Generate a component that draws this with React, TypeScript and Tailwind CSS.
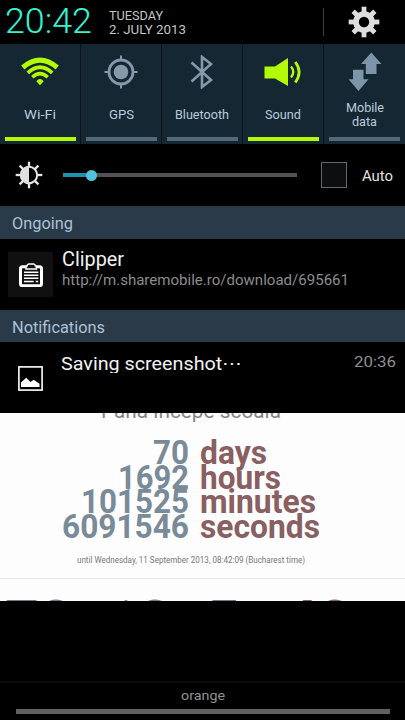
import { useLayoutEffect, useRef, useState } from "react";
import type { ReactNode } from "react";

// Single-line text stretched horizontally to a given width.
function Fit({ w, className = "", children }: { w: number; className?: string; children: ReactNode }) {
  const ref = useRef<HTMLSpanElement>(null);
  const [scale, setScale] = useState(1);
  useLayoutEffect(() => {
    if (ref.current) setScale(w / parseFloat(getComputedStyle(ref.current).width));
  }, [w]);
  return (
    <span className={`block shrink-0 ${className}`} style={{ width: w }}>
      <span ref={ref} className="inline-block origin-left whitespace-nowrap align-top" style={{ transform: `scaleX(${scale})` }}>
        {children}
      </span>
    </span>
  );
}

function Wifi() {
  return (
    <svg width="38" height="30" viewBox="0 0 38 30" fill="none" stroke="#b2fb05">
      <path d="M1.8 10.5Q19-4.3 36.2 10.5" strokeWidth="5" />
      <path d="M6.8 15.8Q19 4.6 31.2 15.8" strokeWidth="3.8" />
      <path d="M11.3 20.3Q19 13 26.7 20.3" strokeWidth="3.4" />
      <path d="M15.3 24.2Q19 19.8 22.7 24.2L19 28.3z" fill="#b2fb05" stroke="none" />
    </svg>
  );
}

function Gps() {
  return (
    <svg width="34" height="34" viewBox="0 0 34 34" fill="none" stroke="#8499a9">
      <circle cx="17" cy="17" r="12" strokeWidth="2.8" />
      <circle cx="17" cy="17" r="7.3" fill="#8499a9" stroke="none" />
      <path d="M17 .5v5M17 28.5v5M.5 17h5M28.5 17h5" strokeWidth="2" />
    </svg>
  );
}

function Bluetooth() {
  return (
    <svg width="24" height="34" viewBox="0 0 24 34" fill="none" stroke="#8499a9" strokeWidth="2.6">
      <path d="M1.5 7.5 21 25l-9 7V2l9 7L1.5 26.5" />
    </svg>
  );
}

function Sound() {
  return (
    <svg width="38" height="30" viewBox="0 0 38 30" fill="none" stroke="#b2fb05">
      <path d="M.5 9.5H11L24 1v28L11 21.5H.5z" fill="#b2fb05" stroke="none" />
      <path d="M27 9.5q4.5 5.5 0 11" strokeWidth="2.4" />
      <path d="M31.3 5q7.6 10 0 20.5" strokeWidth="2.8" />
    </svg>
  );
}

function MobileData() {
  return (
    <svg width="34" height="40" viewBox="0 0 34 40" fill="#7c95a8">
      <path d="M23.3.5 33.5 12h-5v10H17.8V12H13z" />
      <path d="M5 17.8h10.5v9.5h5L10.5 39 .5 27.3H5z" />
    </svg>
  );
}

function Gear() {
  return (
    <svg width="32" height="32" viewBox="-16 -16 32 32">
      <g fill="#dedede">
        {[0, 45, 90, 135].map((a) => (
          <path key={a} d="M-2.4-15.3h4.8v30.6h-4.8z" transform={`rotate(${a})`} />
        ))}
        <circle r="10.8" />
      </g>
      <circle r="5.2" fill="#000" />
    </svg>
  );
}

function Brightness() {
  return (
    <svg width="28" height="28" viewBox="-14 -14 28 28" stroke="#e6e6e6" fill="none">
      {[0, 45, 90, 135, 180, 225, 270, 315].map((a) => (
        <path key={a} d="M0-13.3v5" strokeWidth="2.3" transform={`rotate(${a})`} />
      ))}
      <circle r="8.2" strokeWidth="2" />
      <path d="M0-8.8a8.8 8.8 0 0 0 0 17.6z" fill="#e0e0e0" stroke="none" />
    </svg>
  );
}

function Clipboard() {
  return (
    <svg width="24" height="24" viewBox="0 0 24 24" fill="none" stroke="#fff">
      <rect x="1.5" y="3.8" width="21" height="19" rx="2" strokeWidth="3" />
      <path d="M7 6V3.8Q7 3 7.8 3H8Q8.2 1 9.8 1h4.8q1.6 0 1.8 2h.2q.8 0 .8.8V6z" fill="#111" strokeWidth="1.5" />
      <path d="M5 9.3h14.4M5 12.3h14.4M5 15.3h14.4M5 18.5h9.6M16.7 18.5h2.5" strokeWidth="1.6" />
    </svg>
  );
}

function Picture() {
  return (
    <svg width="25" height="25" viewBox="0 0 25 25">
      <rect x=".9" y=".9" width="23.2" height="23.2" fill="none" stroke="#fff" strokeWidth="1.6" />
      <path d="M3 21v-4.5l5.2-4.7 4.3 4.2 3.2-2.2 5.8 4V21z" fill="#fff" />
    </svg>
  );
}

const tiles = [
  { icon: <Wifi />, lines: [["Wi-Fi", 32]], on: true },
  { icon: <Gps />, lines: [["GPS", 25]], on: false },
  { icon: <Bluetooth />, lines: [["Bluetooth", 54]], on: false },
  { icon: <Sound />, lines: [["Sound", 36]], on: true },
  { icon: <MobileData />, lines: [["Mobile", 38], ["data", 25]], on: false },
] as { icon: ReactNode; lines: [string, number][]; on: boolean }[];

const countdown: [string, number, string, number][] = [
  ["70", 36, "days", 67],
  ["1692", 71, "hours", 81],
  ["101525", 108, "minutes", 116],
  ["6091546", 127, "seconds", 120],
];

export default function App() {
  return (
    <div className="flex h-[720px] w-[405px] flex-col overflow-hidden bg-black font-['Roboto',sans-serif] text-white">
      <header className="flex h-11 shrink-0 items-start pl-[5px]">
        <Fit w={87} className="pt-[1px] text-[35px] font-light leading-[41px] text-[#2ff5d5]">20:42</Fit>
        <div className="ml-[17px] pt-[9px] text-[13px] leading-[14px] text-[#c4c4c4]">
          <Fit w={54}>TUESDAY</Fit>
          <Fit w={77}>2. JULY 2013</Fit>
        </div>
        <div className="ml-auto mt-2 h-7 w-px bg-[#3d4246]" />
        <div className="ml-[24px] mr-[25px] mt-[6px]"><Gear /></div>
      </header>

      <section className="grid h-[100px] shrink-0 grid-cols-5 bg-[#142733]">
        {tiles.map((t, i) => (
          <div key={i} className={`flex flex-col items-center ${i < 4 ? "border-r border-[#08131b]" : ""}`}>
            <div className="flex h-[56px] items-center justify-center">{t.icon}</div>
            <div className="flex h-[37px] flex-col items-center justify-center pb-2 text-[13px] leading-[14px] text-[#b9cbdb]">
              {t.lines.map(([s, w]) => <Fit key={s} w={w}>{s}</Fit>)}
            </div>
            <div className={`h-1 w-[71px] ${t.on ? "bg-[#b2fb05]" : "bg-[#536878]"}`} />
          </div>
        ))}
      </section>

      <section className="flex h-[62px] shrink-0 items-center pl-[15px]">
        <Brightness />
        <div className="ml-5 flex h-1 w-[234px] items-center bg-[#505256]">
          <div className="h-1 w-[23px] bg-[#1e91ab]" />
          <div className="size-[11px] shrink-0 rounded-full bg-[#53c2dc]" />
        </div>
        <div className="ml-6 size-[26px] border border-[#65686a] bg-[#0d0e11]" />
        <Fit w={31} className="ml-[15px] pt-px text-[14px] leading-4 text-[#e1e1e1]">Auto</Fit>
      </section>

      <div className="h-[33px] shrink-0 bg-[#2a3a48] pl-3 pt-[8px] text-[16px] leading-5 text-[#acc3d8]">
        <Fit w={61}>Ongoing</Fit>
      </div>
      <section className="flex h-[71px] shrink-0 pl-2">
        <div className="mt-[13px] flex size-[45px] items-center justify-center bg-[#101010]"><Clipboard /></div>
        <div className="ml-[9px] pt-2">
          <Fit w={62} className="text-[20px] leading-6 text-[#f2f2f2]">Clipper</Fit>
          <Fit w={287} className="text-[15px] leading-[18px] text-[#8c8c8c]">http://m.sharemobile.ro/download/695661</Fit>
        </div>
      </section>

      <div className="h-8 shrink-0 bg-[#2a3a48] pl-3 pt-[8px] text-[16px] leading-5 text-[#acc3d8]">
        <Fit w={93}>Notifications</Fit>
      </div>
      <section className="flex h-[71px] shrink-0 pl-[18px]">
        <div className="mt-6"><Picture /></div>
        <div className="ml-[18px] mt-[10px] h-[21px] overflow-hidden">
          <Fit w={181} className="text-[19px] leading-6 text-[#f2f2f2]">Saving screenshot⋯</Fit>
        </div>
        <Fit w={42} className="ml-auto mr-[9px] mt-[11px] text-[15px] leading-[18px] text-[#8e8e8e]">20:36</Fit>
      </section>

      <main className="flex h-[188px] shrink-0 flex-col overflow-hidden bg-[#fdfdfd]">
        <div className="flex h-[28px] shrink-0 items-start overflow-hidden">
          <Fit w={180} className="-mt-[14px] ml-[101px] text-[20px] leading-6 text-[#858585]">Pana incepe scoala</Fit>
        </div>
        <div className="shrink-0 text-[33px] font-bold leading-[24.5px]">
          {countdown.map(([n, nw, unit, uw]) => (
            <div key={unit} className="flex h-[24.5px] gap-[11px]">
              <div className="flex w-[189px] justify-end text-[#798b99]"><Fit w={nw}>{n}</Fit></div>
              <Fit w={uw} className="text-[#8a5f61]">{unit}</Fit>
            </div>
          ))}
        </div>
        <Fit w={228} className="ml-[77px] mt-[15px] text-[9px] leading-[12px] text-[#777]">until Wednesday, 11 September 2013, 08:42:09 (Bucharest time)</Fit>
        <div className="mt-[12px] h-px shrink-0 bg-[#e9e9e9]" />
        <div className="flex shrink-0 pl-[5px] pt-[8px] text-[60px] font-bold leading-[70px] text-[#687d8c]">
          <Fit w={68}>70</Fit>
          <Fit w={68} className="ml-[31px]">10</Fit>
          <Fit w={34} className="ml-[34px]">5</Fit>
          <Fit w={68} className="ml-[44px] text-[#8a5f61]">40</Fit>
        </div>
      </main>

      <footer className="mt-auto flex h-[39px] shrink-0 flex-col items-center border-t-2 border-[#0b0b0b]">
        <Fit w={44} className="mt-[5px] text-[13px] leading-4 text-[#909090]">orange</Fit>
        <div className="mt-[5px] h-[5px] w-[374px] bg-[#606060]" />
      </footer>
    </div>
  );
}
